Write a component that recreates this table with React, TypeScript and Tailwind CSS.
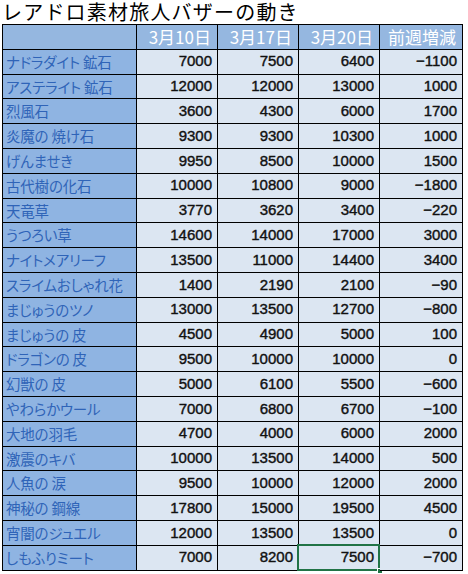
import React from "react";

const rows: [string, string, string, string, string][] = [
  ["ナドラダイト 鉱石", "7000", "7500", "6400", "−1100"],
  ["アステライト 鉱石", "12000", "12000", "13000", "1000"],
  ["烈風石", "3600", "4300", "6000", "1700"],
  ["炎魔の 焼け石", "9300", "9300", "10300", "1000"],
  ["げんませき", "9950", "8500", "10000", "1500"],
  ["古代樹の化石", "10000", "10800", "9000", "−1800"],
  ["天竜草", "3770", "3620", "3400", "−220"],
  ["うつろい草", "14600", "14000", "17000", "3000"],
  ["ナイトメアリーフ", "13500", "11000", "14400", "3400"],
  ["スライムおしゃれ花", "1400", "2190", "2100", "−90"],
  ["まじゅうのツノ", "13000", "13500", "12700", "−800"],
  ["まじゅうの 皮", "4500", "4900", "5000", "100"],
  ["ドラゴンの 皮", "9500", "10000", "10000", "0"],
  ["幻獣の 皮", "5000", "6100", "5500", "−600"],
  ["やわらかウール", "7000", "6800", "6700", "−100"],
  ["大地の羽毛", "4700", "4000", "6000", "2000"],
  ["激震のキバ", "10000", "13500", "14000", "500"],
  ["人魚の 涙", "9500", "10000", "12000", "2000"],
  ["神秘の 鋼線", "17800", "15000", "19500", "4500"],
  ["宵闇のジュエル", "12000", "13500", "13500", "0"],
  ["しもふりミート", "7000", "8200", "7500", "−700"],
];

const headers = ["3月10日", "3月17日", "3月20日", "前週増減"];

export default function App() {
  return (
    <div className="w-[468px] h-[574px] bg-white overflow-hidden relative">
      <div className="pl-[2px] text-[20px] leading-[24px] tracking-[1.2px] text-black font-['Noto_Sans_CJK_JP',sans-serif] whitespace-nowrap">
        レアドロ素材旅人バザーの動き
      </div>
      <div className="ml-[2px] grid grid-cols-[134px_81px_81px_81px_83px] auto-rows-[24.8px] border-l border-t border-black w-fit">
        <div className="border-r border-b border-black bg-[#95b7e0]" />
        {headers.map((h) => (
          <div
            key={h}
            className="border-r border-b border-black bg-[#95b7e0] text-white text-[17px] flex items-center justify-end pr-[6px] font-['Noto_Sans_CJK_JP',sans-serif] [font-feature-settings:'palt']"
          >
            {h}
          </div>
        ))}
        {rows.map((r, i) => (
          <React.Fragment key={i}>
            <div className="border-r border-b border-black bg-[#8fb4e2] text-[#2f64b8] text-[14.5px] tracking-[-0.2px] flex items-center pl-[3px] whitespace-nowrap overflow-hidden font-['Noto_Sans_CJK_JP',sans-serif] [font-feature-settings:'palt']">
              {r[0]}
            </div>
            {r.slice(1).map((v, j) => {
              const selected = i === rows.length - 1 && j === 2;
              return (
                <div
                  key={j}
                  className="relative border-r border-b border-black bg-[#dce6f2] text-[#111] text-[15px] [-webkit-text-stroke:0.4px_#111] flex items-center justify-end pr-[5px] font-['Liberation_Sans',sans-serif]"
                >
                  {v}
                  {selected && (
                    <>
                      <div className="absolute left-[-2px] top-[-2px] right-[-1px] bottom-[-1px] border-2 border-[#217346] pointer-events-none" />
                      <div className="absolute right-[-4px] bottom-[-4px] w-[6px] h-[6px] bg-[#217346] border border-white" />
                    </>
                  )}
                </div>
              );
            })}
          </React.Fragment>
        ))}
      </div>
    </div>
  );
}
